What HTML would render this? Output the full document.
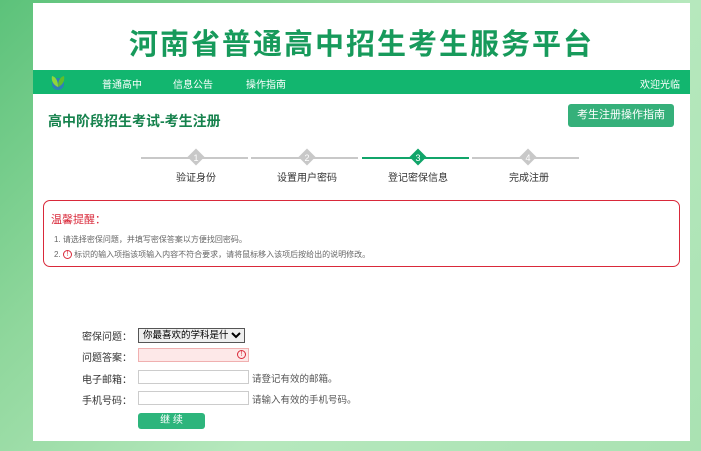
<!DOCTYPE html>
<html><head><meta charset="utf-8"><style>
*{margin:0;padding:0;box-sizing:border-box}
body{width:701px;height:451px;overflow:hidden;position:relative;font-family:"Liberation Sans","Noto Sans CJK SC",sans-serif;background:linear-gradient(135deg,#5cc27a 0%,#8fd79c 30%,#b6e8bd 60%,#a9e2b2 100%)}
.wrap{position:absolute;left:33px;top:3px;width:657px;height:438px;background:#fff}
.title{position:absolute;left:0;width:657px;top:18px;text-align:center;font-size:29px;font-weight:bold;color:#179a5b;letter-spacing:2px}
.nav{position:absolute;left:0;top:67px;width:657px;height:24px;background:#12b66f;color:#fff;font-size:10px}
.nav span{position:absolute;top:6px}
.h{position:absolute;left:15px;top:108px;font-size:14px;font-weight:bold;color:#16824d}
.btn{position:absolute;left:535px;top:101px;width:106px;height:23px;background:#35b07a;border-radius:3px;color:#fff;font-size:11px;text-align:center;line-height:23px}
.line{position:absolute;top:154px;height:2px;background:#c8c8c8}
.dia{position:absolute;top:148px;width:12px;height:12px;transform:rotate(45deg);background:#c8c8c8}
.num{position:absolute;top:148px;width:12px;text-align:center;font-size:9px;color:#fff;line-height:14px}
.sl{position:absolute;top:166px;font-size:10px;color:#333}
.alert{position:absolute;left:10px;top:197px;width:637px;height:67px;border:1.5px solid #d9293a;border-radius:7px}
.alert .t{position:absolute;left:7px;top:10px;font-size:11px;color:#d9293a}
.alert .p{position:absolute;left:10px;font-size:8px;color:#666}
.lab{position:absolute;left:49px;font-size:10px;color:#333}
.in{position:absolute;left:105px;width:111px;height:14px;border:1px solid #ccc;background:#fff}
.hint{position:absolute;left:219px;font-size:9.5px;color:#555}
.go{position:absolute;left:105px;top:410px;width:67px;height:16px;background:#2db57c;border-radius:3px;color:#fff;font-size:10px;text-align:center;line-height:16px}
.warn{display:inline-block;width:9px;height:9px;border:1px solid #d9293a;border-radius:50%;color:#d9293a;font-size:7px;line-height:8px;text-align:center;vertical-align:middle}
</style></head><body>
<div class="wrap">
<div class="title">河南省普通高中招生考生服务平台</div>
<div class="nav">
<svg style="position:absolute;left:16px;top:3px" width="18" height="18" viewBox="0 0 18 18"><circle cx="9" cy="11" r="6" fill="#2d7fb8"/><path d="M9 14C4 12 2 7 3 3c4 1 6 5 6 11z" fill="#8fd63a"/><path d="M9 14c5-2 7-7 6-11-4 1-6 5-6 11z" fill="#5fbf2a"/></svg>
<span style="left:69px">普通高中</span><span style="left:140px">信息公告</span><span style="left:213px">操作指南</span><span style="right:10px">欢迎光临</span>
</div>
<div class="h">高中阶段招生考试-考生注册</div>
<div class="btn">考生注册操作指南</div>
<div class="line" style="left:108px;width:107px"></div>
<div class="line" style="left:218px;width:107px"></div>
<div class="line" style="left:329px;width:107px;background:#11a56a"></div>
<div class="line" style="left:439px;width:107px"></div>
<div class="dia" style="left:157px"></div><div class="num" style="left:157px">1</div>
<div class="dia" style="left:268px"></div><div class="num" style="left:268px">2</div>
<div class="dia" style="left:379px;background:#11a56a"></div><div class="num" style="left:379px">3</div>
<div class="dia" style="left:489px"></div><div class="num" style="left:489px">4</div>
<div class="sl" style="left:143px">验证身份</div>
<div class="sl" style="left:244px">设置用户密码</div>
<div class="sl" style="left:355px">登记密保信息</div>
<div class="sl" style="left:476px">完成注册</div>
<div class="alert">
<div class="t">温馨提醒：</div>
<div class="p" style="top:33px">1. 请选择密保问题，并填写密保答案以方便找回密码。</div>
<div class="p" style="top:48px">2. <span class="warn">!</span> 标识的输入项指该项输入内容不符合要求，请将鼠标移入该项后按给出的说明修改。</div>
</div>
<div class="lab" style="top:325px">密保问题：</div>
<select style="position:absolute;left:105px;top:325px;width:107px;height:15px;font-size:9.5px;border:1px solid #555;font-family:inherit"><option>你最喜欢的学科是什么?</option></select>
<div class="lab" style="top:346px">问题答案：</div>
<div class="in" style="top:345px;background:#fde8e8;border-color:#f0b0b0"><span class="warn" style="position:absolute;right:2px;top:1px">!</span></div>
<div class="lab" style="top:368px">电子邮箱：</div>
<div class="in" style="top:367px"></div><div class="hint" style="top:368px">请登记有效的邮箱。</div>
<div class="lab" style="top:389px">手机号码：</div>
<div class="in" style="top:388px"></div><div class="hint" style="top:389px">请输入有效的手机号码。</div>
<div class="go">继 续</div>
</div>
</body></html>
